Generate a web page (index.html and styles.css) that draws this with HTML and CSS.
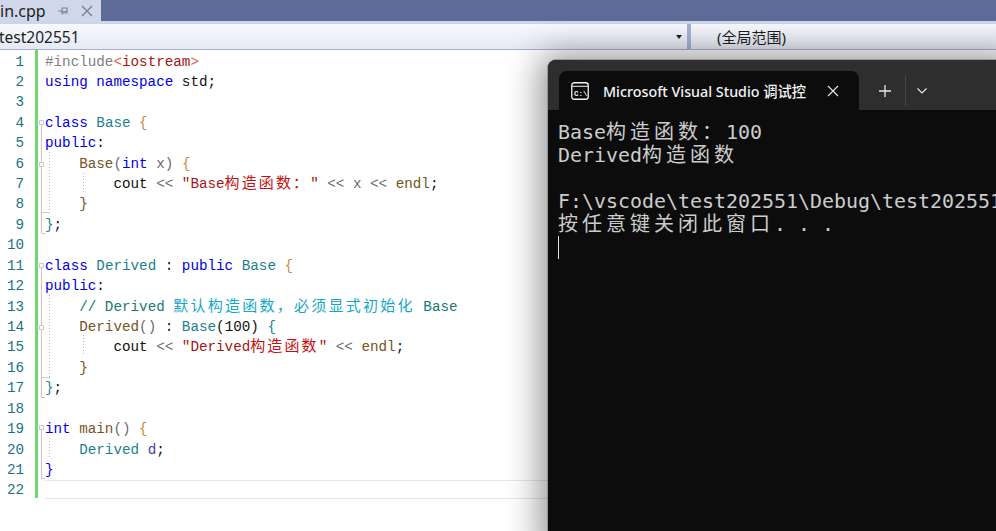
FILE: index.html
```html
<!DOCTYPE html>
<html lang="zh">
<head>
<meta charset="utf-8">
<title>main.cpp</title>
<link rel="stylesheet" href="styles.css">
</head>
<body>
<div class="ide">
  <header class="tabbar">
    <div class="doc-tab">
      <span class="doc-name">in.cpp</span>
      <svg class="pin" width="12" height="12" viewBox="0 0 12 12"><path d="M1 6h4M5 2.500v7M5 3h5v5H5M5 6.500h5" fill="none" stroke="#7b839e" stroke-width="1.200"/></svg>
      <svg class="close" width="12" height="12" viewBox="0 0 12 12"><path d="M1 1l10 10M11 1L1 11" fill="none" stroke="#7b839e" stroke-width="1.500"/></svg>
    </div>
  </header>
  <div class="strip"></div>
  <nav class="navbar">
    <div class="nav-project"><span>test202551</span><i class="caret"></i></div>
    <div class="nav-split"></div>
    <div class="nav-scope">(全局范围)</div>
  </nav>
  <main class="editor">
    <div class="gutter">
      <div>1</div><div>2</div><div>3</div><div>4</div><div>5</div><div>6</div><div>7</div><div>8</div><div>9</div><div>10</div><div>11</div><div>12</div><div>13</div><div>14</div><div>15</div><div>16</div><div>17</div><div>18</div><div>19</div><div>20</div><div>21</div><div>22</div>
    </div>
    <div class="changebar"></div>
    <div class="code">
      <div><span class="pp">#include</span><span class="lt">&lt;</span><span class="str">iostream</span><span class="lt">&gt;</span></div>
      <div><span class="kw">using namespace</span> std;</div>
      <div></div>
      <div><span class="kw">class</span> <span class="ty">Base</span> <span class="br">{</span></div>
      <div><span class="kw">public</span>:</div>
      <div>    <span class="fn">Base</span><span class="op">(</span><span class="kw">int</span> <span class="pa">x</span><span class="op">)</span> <span class="br">{</span></div>
      <div>        cout <span class="op">&lt;&lt;</span> <span class="str">"Base<span class="cn">构造函数：</span>"</span> <span class="op">&lt;&lt;</span> <span class="pa">x</span> <span class="op">&lt;&lt;</span> <span class="fn">endl</span>;</div>
      <div>    <span class="fn">}</span></div>
      <div><span class="ty">}</span>;</div>
      <div></div>
      <div><span class="kw">class</span> <span class="ty">Derived</span> : <span class="kw">public</span> <span class="ty">Base</span> <span class="br">{</span></div>
      <div><span class="kw">public</span>:</div>
      <div>    <span class="com">// Derived <span class="cn cy">默认构造函数，必须显式初始化</span> Base</span></div>
      <div>    <span class="fn">Derived</span><span class="op">()</span> : <span class="ty">Base</span>(100) <span class="ty">{</span></div>
      <div>        cout <span class="op">&lt;&lt;</span> <span class="str">"Derived<span class="cn">构造函数</span>"</span> <span class="op">&lt;&lt;</span> <span class="fn">endl</span>;</div>
      <div>    <span class="fn">}</span></div>
      <div><span class="ty">}</span>;</div>
      <div></div>
      <div><span class="kw">int</span> <span class="fn">main</span><span class="op">()</span> <span class="br">{</span></div>
      <div>    <span class="ty">Derived</span> <span class="pa2">d</span>;</div>
      <div><span class="kw">}</span></div>
      <div class="current"></div>
    </div>
    <svg class="folds" width="90" height="440" viewBox="0 0 90 440">
      <g fill="none" stroke="#c8c8c8">
        <path d="M41.500 75V183.500H45M41.500 218V347.500H45M41.500 380V428.500H45"/>
        <path d="M41.500 117V162.500H50M41.500 280V327.500H50"/>
        <path d="M39.500 70.500h4v4h-4zM39.500 112.500h4v4h-4zM39.500 213.500h4v4h-4zM39.500 275.500h4v4h-4zM39.500 375.500h4v4h-4z" fill="#fff"/>
      </g>
      <g fill="none" stroke="#b4b4b4" stroke-dasharray="1 2">
        <path d="M49.500 102V162M49.500 245V327M49.500 388V407M83.500 123V142M83.500 285V305"/>
      </g>
    </svg>
  </main>
</div>
<section class="terminal">
  <div class="term-bar">
    <div class="term-tab">
      <svg class="term-icon" width="18" height="18" viewBox="0 0 18 18"><rect x=".75" y=".75" width="16.500" height="16.500" rx="2.500" fill="none" stroke="#f2f2f2" stroke-width="1.300"/><path d="M1 4.300h16" stroke="#f2f2f2"/><text x="3" y="13.500" class="icon-text">C:\</text></svg>
      <span class="term-title">Microsoft Visual Studio 调试控</span>
      <svg class="term-close" width="12" height="12" viewBox="0 0 12 12"><path d="M1 1l10 10M11 1L1 11" fill="none" stroke="#e8e8e8" stroke-width="1.100"/></svg>
    </div>
    <svg class="term-plus" width="14" height="14" viewBox="0 0 14 14"><path d="M7 1v12M1 7h12" fill="none" stroke="#e8e8e8" stroke-width="1.300"/></svg>
    <div class="term-sep"></div>
    <svg class="term-chev" width="10" height="6" viewBox="0 0 10 6"><path d="M.5.500L5 5 9.500.500" fill="none" stroke="#e8e8e8" stroke-width="1.200"/></svg>
  </div>
  <div class="term-body">
    <div>Base<span class="tcn">构造函数：</span>100</div>
    <div>Derived<span class="tcn">构造函数</span></div>
    <div></div>
    <div>F:\vscode\test202551\Debug\test202551</div>
    <div><span class="tcn">按任意键关闭此窗口</span>. . .</div>
    <div><i class="cursor"></i></div>
  </div>
</section>
</body>
</html>
```
FILE: styles.css
```css
html, body {
  margin: 0;
  height: 100%;
  overflow: hidden;
  background: #fff;
}
.ide {
  height: 531px;
  display: flex;
  flex-direction: column;
  font-family: "Noto Sans", "Noto Sans CJK SC", sans-serif;
}
.tabbar {
  height: 21px;
  background: #5d6b97;
  display: flex;
  flex: none;
}
.doc-tab {
  width: 101px;
  background: #d0d7e9;
  display: flex;
  align-items: center;
  overflow: hidden;
  color: #1e1e1e;
  font-size: 16px;
}
.doc-name { flex: none; width: 57px; }
.pin { flex: none; margin-right: 12px; }
.close { flex: none; }
.strip { height: 3px; background: #cdd5ea; flex: none; }
.navbar {
  height: 25px;
  flex: none;
  display: flex;
  align-items: center;
  background: linear-gradient(#f8f9fe, #e6e9f5);
  border-bottom: 1px solid #a5b1d0;
  font-size: 15px;
  color: #1e1e1e;
}
.nav-project {
  width: 687px;
  display: flex;
  align-items: center;
  justify-content: space-between;
  padding-right: 5px;
  box-sizing: border-box;
}
.nav-project span { font-size: 15.500px; margin-left: -1px; }
.caret {
  width: 0;
  height: 0;
  border-left: 3.500px solid transparent;
  border-right: 3.500px solid transparent;
  border-top: 4px solid #1e1e1e;
}
.nav-split { width: 4px; height: 25px; background: #a3b3d8; }
.nav-scope { margin-left: 26px; }
.editor {
  position: relative;
  flex: 1;
  display: flex;
  font-family: "Liberation Mono", "Noto Sans CJK SC", monospace;
  font-size: 14.250px;
  color: #111;
  padding-top: 1px;
}
.gutter {
  width: 35px;
  box-sizing: border-box;
  padding-right: 11px;
  text-align: right;
  color: #17747f;
}
.gutter div, .code div {
  height: 20.430px;
  line-height: 20.430px;
  white-space: pre;
  position: relative;
  top: .5px;
}
.changebar {
  width: 3px;
  height: 448px;
  margin-top: -1px;
  background: #73d66e;
  flex: none;
}
.code { margin-left: 7px; flex: 1; }
.code .current {
  height: 19px;
  top: 0;
  box-sizing: border-box;
  border-top: 1px solid #e6e6ee;
  border-bottom: 1px solid #e6e6ee;
}
.kw { color: #0000e6; }
.ty { color: #1c7f8c; }
.fn { color: #74531f; }
.pp { color: #808080; }
.lt { color: #e0604c; }
.str { color: #a31515; }
.br { color: #c98a3c; }
.op { color: #6b6b6b; }
.pa { color: #6b6b6b; }
.pa2 { color: #3a3fa8; }
.com { color: #167a72; }
.cn {
  font-family: "Noto Sans CJK SC", sans-serif;
  font-size: 15px;
  letter-spacing: 2.100px;
  color: #c80f0f;
  line-height: 1;
}
.cn.cy { color: #12a8c8; letter-spacing: 2.250px; }
.folds {
  position: absolute;
  left: 0;
  top: 0;
  pointer-events: none;
}
.terminal {
  position: absolute;
  left: 548px;
  top: 60px;
  width: 470px;
  height: 490px;
  border-radius: 8px 8px 0 0;
  background: #0c0c0c;
  box-shadow: 0 0 0 1px rgba(120,120,120,.55), -2px 0 34px 6px rgba(0,0,0,.42);
  overflow: hidden;
}
.term-bar {
  height: 50px;
  background: #2e2e2e;
  display: flex;
  align-items: center;
  box-sizing: border-box;
  padding: 11px 0 0 11px;
}
.term-tab {
  width: 300px;
  height: 39px;
  background: #0c0c0c;
  border-radius: 8px 8px 0 0;
  display: flex;
  align-items: center;
  box-sizing: border-box;
  padding-left: 12px;
  flex: none;
}
.term-icon { flex: none; }
.icon-text {
  font-family: "Liberation Mono", monospace;
  font-size: 7.500px;
  font-weight: 700;
  fill: #f2f2f2;
}
.term-title {
  margin-left: 14px;
  width: 205px;
  white-space: nowrap;
  flex: none;
  color: #f4f4f4;
  font-family: "Noto Sans", "Noto Sans CJK SC", sans-serif;
  font-size: 14.300px;
  font-weight: 500;
}
.term-close { margin-left: 19px; flex: none; }
.term-plus { margin-left: 19px; flex: none; }
.term-sep { width: 1px; height: 30px; background: #474747; margin-left: 13px; flex: none; }
.term-chev { margin-left: 11px; flex: none; }
.term-body {
  padding: 11px 0 0 10px;
  font-family: "DejaVu Sans Mono", "Noto Sans CJK SC", monospace;
  font-size: 19.950px;
  color: #cccccc;
}
.term-body div { height: 23px; line-height: 23px; white-space: pre; }
.tcn {
  font-family: "Noto Sans CJK SC", sans-serif;
  font-size: 20px;
  letter-spacing: 4px;
  line-height: 1;
}
.cursor {
  display: inline-block;
  width: 1px;
  height: 23px;
  background: #e6e6e6;
  vertical-align: top;
}
```
